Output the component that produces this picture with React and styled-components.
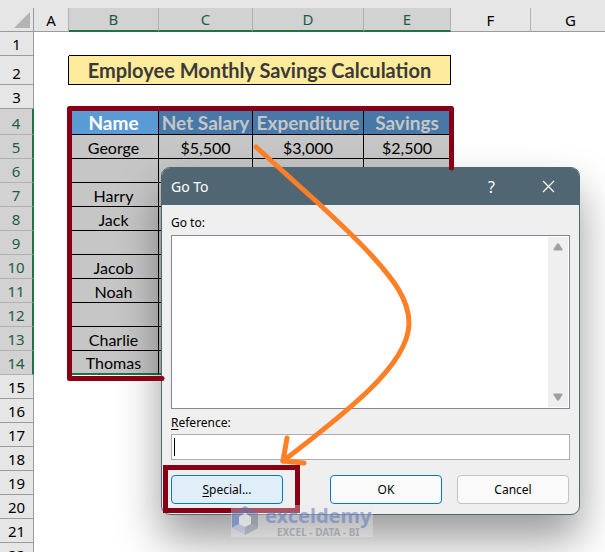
import React, { useState } from 'react';
import styled, { createGlobalStyle } from 'styled-components';

const columns = [
    { name: 'A', width: 35 },
    { name: 'B', width: 90, selected: true },
    { name: 'C', width: 94, selected: true },
    { name: 'D', width: 111, selected: true },
    { name: 'E', width: 87, selected: true },
    { name: 'F', width: 80 },
    { name: 'G', width: 80 },
];

const headings = ['Name', 'Net Salary', 'Expenditure', 'Savings'];

const records = [
    ['George', '$5,500', '$3,000', '$2,500'],
    ['', '', '', ''],
    ['Harry', '', '', ''],
    ['Jack', '', '', ''],
    ['', '', '', ''],
    ['Jacob', '', '', ''],
    ['Noah', '', '', ''],
    ['', '', '', ''],
    ['Charlie', '', '', ''],
    ['Thomas', '', '', ''],
];

const emptyRows = [15, 16, 17, 18, 19, 20, 21, 22];

const Sheet = () => (
    <Grid>
        <colgroup>
            <col style={{ width: 34 }} />
            {columns.map((c) => (
                <col key={c.name} style={{ width: c.width }} />
            ))}
        </colgroup>
        <thead>
            <tr>
                <Corner>
                    <svg width="16" height="16" viewBox="0 0 16 16">
                        <path d="M16 0V16H0Z" fill="#b4b4b4" />
                    </svg>
                </Corner>
                {columns.map((c) => (
                    <ColumnHead key={c.name} scope="col" $selected={c.selected}>{c.name}</ColumnHead>
                ))}
            </tr>
        </thead>
        <tbody>
            <Row>
                <RowHead scope="row">1</RowHead>
                <td />
                <TitleEdge colSpan={4} />
                <td colSpan={2} />
            </Row>
            <Row $height={29}>
                <RowHead scope="row">2</RowHead>
                <TitleEdge $side />
                <Title colSpan={4}>Employee Monthly Savings Calculation</Title>
                <td colSpan={2} />
            </Row>
            <Row>
                <RowHead scope="row">3</RowHead>
                <td colSpan={7} />
            </Row>
            <Row $height={26}>
                <RowHead scope="row" $selected>4</RowHead>
                <td />
                {headings.map((text, i) => (
                    <Heading key={text} $active={i === 0}>{text}</Heading>
                ))}
                <td colSpan={2} />
            </Row>
            {records.map((record, r) => (
                <Row key={r}>
                    <RowHead scope="row" $selected>{r + 5}</RowHead>
                    <td />
                    {record.map((value, i) => (
                        <Cell key={i} $last={r === records.length - 1}>{value}</Cell>
                    ))}
                    <td colSpan={2} />
                </Row>
            ))}
            {emptyRows.map((n) => (
                <Row key={n}>
                    <RowHead scope="row">{n}</RowHead>
                    <td colSpan={7} />
                </Row>
            ))}
        </tbody>
    </Grid>
);

const GoToDialog = () => {
    const [reference, setReference] = useState('');

    return (
        <Dialog role="dialog" aria-labelledby="goto-title">
            <TitleBar>
                <h1 id="goto-title">Go To</h1>
                <TitleButton type="button" aria-label="Help">?</TitleButton>
                <TitleButton type="button" aria-label="Close">
                    <svg width="13" height="13" viewBox="0 0 13 13">
                        <path d="M1 1L12 12M12 1L1 12" stroke="#fff" strokeWidth="1.2" />
                    </svg>
                </TitleButton>
            </TitleBar>
            <Body>
                <label htmlFor="goto-list">Go to:</label>
                <ListBox>
                    <select id="goto-list" size={8} />
                    <ScrollBar>
                        <button type="button" aria-label="Scroll up">
                            <svg width="10" height="8" viewBox="0 0 10 8">
                                <path d="M4 0.8Q5 -0.4 6 0.8L9.4 6Q10 7.5 8.5 7.6H1.5Q0 7.5 0.6 6Z" fill="#a0a0a0" />
                            </svg>
                        </button>
                        <button type="button" aria-label="Scroll down">
                            <svg width="10" height="8" viewBox="0 0 10 8">
                                <path d="M4 7.2Q5 8.4 6 7.2L9.4 2Q10 0.5 8.5 0.4H1.5Q0 0.5 0.6 2Z" fill="#a0a0a0" />
                            </svg>
                        </button>
                    </ScrollBar>
                </ListBox>
                <label htmlFor="goto-reference"><u>R</u>eference:</label>
                <Field>
                    <Caret />
                    <input
                        id="goto-reference"
                        value={reference}
                        onChange={(e) => setReference(e.target.value)}
                    />
                </Field>
                <Actions>
                    <Button type="button" $kind="hot"><span><u>S</u>pecial...</span></Button>
                    <Button type="button" $kind="default">OK</Button>
                    <Button type="button">Cancel</Button>
                </Actions>
            </Body>
        </Dialog>
    );
};

const Annotations = () => (
    <Marks width="605" height="552" viewBox="0 0 605 552" fill="none" strokeLinecap="round" strokeLinejoin="round">
        <g stroke="#880015" strokeWidth="5">
            <path d="M451.5 168V108.5H69.5V378.5H162" />
            <rect x="165.5" y="467.5" width="132" height="43" strokeLinejoin="miter" />
        </g>
        <g stroke="#ff7f27" strokeWidth="5">
            <path d="M256 147L317 202C335 219 355 237 373 257C392 278 409 299 409 323C409 347 388 372 367 392C350 408 325 429 283 461" />
            <path d="M287 438L283 461L304 463" />
        </g>
    </Marks>
);

const Brand = () => (
    <Watermark>
        <svg width="28" height="30" viewBox="0 0 28 30">
            <path d="M14 0L27 7L20 11L14 7L8 11L1 7Z" fill="#7f8fb8" />
            <path d="M1 7L8 11V18L1 22Z" fill="#6f87cc" />
            <path d="M27 7L20 11V18L27 22Z" fill="#8b96a3" />
            <path d="M14 7L20 11V18L14 21L8 18V11Z" fill="#eef0f5" />
            <path d="M1 22L8 18L14 21V29Z" fill="#b4c2d8" />
            <path d="M27 22L20 18L14 21V29Z" fill="#98a2ae" />
        </svg>
        <div>
            <strong>exceldemy</strong>
            <small>EXCEL - DATA - BI</small>
        </div>
    </Watermark>
);

const App = () => (
    <Page>
        <GlobalStyle />
        <Sheet />
        <GoToDialog />
        <Annotations />
        <Brand />
    </Page>
);

const GlobalStyle = createGlobalStyle`
    * {
        box-sizing: border-box;
    }

    body {
        margin: 0;
        background-color: #ffffff;
    }
`;

const Page = styled.main`
    position: relative;
    height: 100vh;
    overflow: hidden;
    padding-top: 8px;
    background: linear-gradient(#e6e6e6 8px, #ffffff 8px);
`;

const Grid = styled.table`
    width: 100%;
    min-width: 611px;
    table-layout: fixed;
    border-collapse: separate;
    border-spacing: 0;
    font-family: Lato, sans-serif;

    td,
    th {
        padding: 0;
    }
`;

const Corner = styled.td`
    height: 24px;
    background-color: #e6e6e6;
    border-right: 1px solid #9b9b9b;
    border-bottom: 1px solid #9b9b9b;
    text-align: right;

    svg {
        display: block;
        margin: 0 3px 0 auto;
    }
`;

const ColumnHead = styled.th`
    height: 24px;
    background-color: ${(p) => (p.$selected ? '#d2d2d2' : '#e6e6e6')};
    border-right: 1px solid #b1b1b1;
    border-bottom: ${(p) => (p.$selected ? '2px solid #217346' : '1px solid #9b9b9b')};
    color: ${(p) => (p.$selected ? '#1f5c3f' : '#000000')};
    font-family: 'Noto Sans', sans-serif;
    font-size: 15px;
    font-weight: 400;
    line-height: 20px;
`;

const Row = styled.tr`
    height: ${(p) => p.$height || 24}px;
`;

const RowHead = styled.th`
    background-color: ${(p) => (p.$selected ? '#d2d2d2' : '#e6e6e6')};
    border-right: ${(p) => (p.$selected ? '2px solid #217346' : '1px solid #9b9b9b')};
    border-bottom: 1px solid ${(p) => (p.$selected ? '#b1b1b1' : '#9b9b9b')};
    color: ${(p) => (p.$selected ? '#1f5c3f' : '#000000')};
    font-family: 'Noto Sans', sans-serif;
    font-size: 15px;
    font-weight: 400;
    line-height: 22px;
    vertical-align: bottom;
`;

const TitleEdge = styled.td`
    ${(p) => (p.$side ? 'border-right' : 'border-bottom')}: 1px solid #000000;
`;

const Title = styled.td`
    background-color: #ffeb9c;
    border-right: 1px solid #000000;
    border-bottom: 1px solid #000000;
    color: #3a3a3a;
    font-size: 20px;
    font-weight: 700;
    line-height: 28px;
    text-align: center;
    white-space: nowrap;
`;

const Heading = styled.th`
    background-color: ${(p) => (p.$active ? '#5b9bd5' : '#4878a8')};
    border-right: 1px solid #000000;
    border-bottom: 1px solid #000000;
    color: ${(p) => (p.$active ? '#ffffff' : '#c6c6c6')};
    font-size: 19px;
    font-weight: 700;
    line-height: 22px;
    vertical-align: bottom;
    white-space: nowrap;
`;

const Cell = styled.td`
    background-color: #c6c6c6;
    border-right: 1px solid #000000;
    border-bottom: ${(p) => (p.$last ? '2px solid #217346' : '1px solid #000000')};
    color: #000000;
    font-size: 16px;
    line-height: 20px;
    text-align: center;
    vertical-align: bottom;
`;

const Dialog = styled.section`
    position: absolute;
    top: 167px;
    left: 161px;
    width: 419px;
    overflow: hidden;
    background-color: #efefef;
    border: 1px solid #516673;
    border-radius: 9px;
    box-shadow: 0 24px 44px rgba(0, 0, 0, 0.4);
    color: #000000;
    font-family: 'Noto Sans', sans-serif;
    font-size: 12px;
`;

const TitleBar = styled.header`
    display: flex;
    align-items: center;
    height: 37px;
    padding: 0 2px 0 9px;
    background-color: #516673;
    color: #ffffff;

    h1 {
        flex: 1;
        margin: 0;
        font-size: 14px;
        font-weight: 400;
    }
`;

const TitleButton = styled.button`
    display: flex;
    align-items: center;
    justify-content: center;
    width: 57px;
    height: 37px;
    padding: 0;
    background: none;
    border: none;
    color: #ffffff;
    font-family: inherit;
    font-size: 16px;
`;

const Body = styled.div`
    display: flex;
    flex-direction: column;
    padding: 10px 9px;

    label {
        line-height: 16px;
    }

    u {
        text-underline-offset: 2px;
    }
`;

const ListBox = styled.div`
    display: flex;
    height: 174px;
    margin: 4px 0 6px;
    padding: 1px;
    background-color: #ffffff;
    border: 1px solid #828790;

    select {
        flex: 1;
        appearance: none;
        padding: 0;
        background: none;
        border: none;
        outline: none;
        overflow: hidden;
        font: inherit;
    }
`;

const ScrollBar = styled.div`
    display: flex;
    flex-direction: column;
    justify-content: space-between;
    width: 20px;
    background-color: #efefef;

    button {
        display: flex;
        align-items: center;
        justify-content: center;
        height: 20px;
        padding: 0;
        background: none;
        border: none;
    }
`;

const Field = styled.div`
    display: flex;
    align-items: center;
    height: 26px;
    margin: 3px 0 15px;
    padding: 0 3px 0 2px;
    background-color: #ffffff;
    border: 1px solid #abadb3;

    input {
        flex: 1;
        padding: 0;
        background: none;
        border: none;
        outline: none;
        font: inherit;
    }
`;

const Caret = styled.span`
    width: 1px;
    height: 18px;
    background-color: #000000;
`;

const Actions = styled.div`
    display: flex;
    gap: 15px;
    padding-right: 1px;
`;

const Button = styled.button`
    width: 112px;
    height: 29px;
    padding: 0;
    background-color: ${(p) => (p.$kind === 'hot' ? '#e0eef9' : '#fafafa')};
    border: 1px solid ${(p) => (p.$kind ? '#0078d4' : '#c4c4c4')};
    border-radius: 4px;
    color: #000000;
    font-family: inherit;
    font-size: 12px;

    &:first-child {
        margin-right: auto;
    }
`;

const Marks = styled.svg`
    position: absolute;
    top: 0;
    left: 0;
    pointer-events: none;
`;

const Watermark = styled.aside`
    position: absolute;
    top: 505px;
    left: 231px;
    display: flex;
    align-items: center;
    gap: 6px;
    height: 32px;
    padding-right: 2px;
    background-color: rgba(235, 235, 235, 0.5);
    font-family: 'Noto Sans', sans-serif;
    opacity: 0.7;
    pointer-events: none;

    div {
        display: flex;
        flex-direction: column;
        align-items: center;
    }

    strong {
        color: #7c92cc;
        font-size: 20px;
        font-weight: 700;
        line-height: 22px;
    }

    small {
        color: #929ca4;
        font-size: 10px;
        font-weight: 700;
        line-height: 10px;
    }
`;

export default App;
